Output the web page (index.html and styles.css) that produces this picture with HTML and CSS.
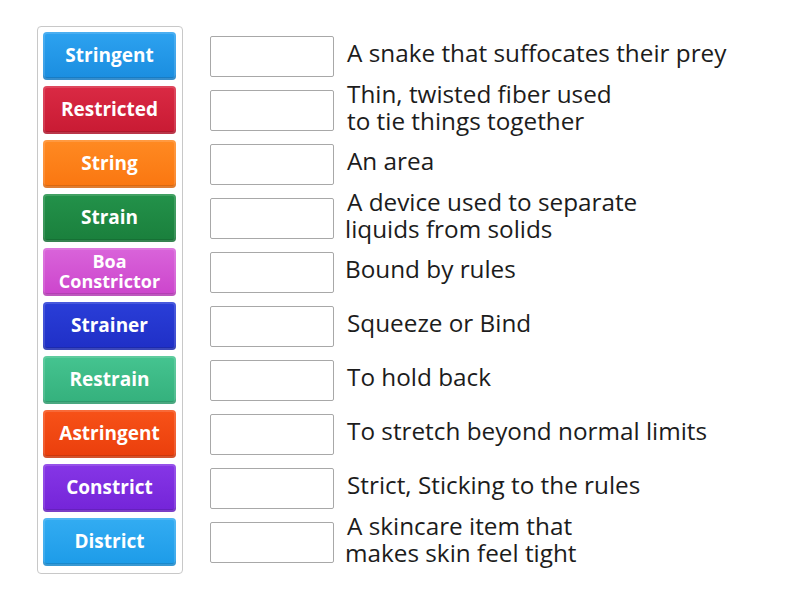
FILE: index.html
```html
<!DOCTYPE html>
<html>
<head>
<meta charset="utf-8">
<link rel="stylesheet" href="styles.css">
</head>
<body>
<div class="game">
  <div class="bank">
    <div class="tile c1">Stringent</div>
    <div class="tile c2">Restricted</div>
    <div class="tile c3">String</div>
    <div class="tile c4">Strain</div>
    <div class="tile c5 small">Boa<br>Constrictor</div>
    <div class="tile c6">Strainer</div>
    <div class="tile c7">Restrain</div>
    <div class="tile c8">Astringent</div>
    <div class="tile c9">Constrict</div>
    <div class="tile c10">District</div>
  </div>
  <div class="rows">
    <div class="row"><div class="slot"></div><div class="def"><span class="ln">A snake that suffocates their prey</span></div></div>
    <div class="row"><div class="slot"></div><div class="def"><span class="ln">Thin, twisted fiber used</span><span class="ln">to tie things together</span></div></div>
    <div class="row"><div class="slot"></div><div class="def"><span class="ln">An area</span></div></div>
    <div class="row"><div class="slot"></div><div class="def"><span class="ln">A device used to separate</span><span class="ln nudge">liquids from solids</span></div></div>
    <div class="row"><div class="slot"></div><div class="def"><span class="ln nudge">Bound by rules</span></div></div>
    <div class="row"><div class="slot"></div><div class="def"><span class="ln">Squeeze or Bind</span></div></div>
    <div class="row"><div class="slot"></div><div class="def"><span class="ln">To hold back</span></div></div>
    <div class="row"><div class="slot"></div><div class="def"><span class="ln">To stretch beyond normal limits</span></div></div>
    <div class="row"><div class="slot"></div><div class="def"><span class="ln">Strict, Sticking to the rules</span></div></div>
    <div class="row"><div class="slot"></div><div class="def"><span class="ln">A skincare item that</span><span class="ln nudge">makes skin feel tight</span></div></div>
  </div>
</div>
</body>
</html>
```

FILE: styles.css
```css
html, body {
  margin: 0;
  padding: 0;
  background: #fff;
}

.game {
  display: flex;
  align-items: flex-start;
  padding: 26px 0 0 37px;
  font-family: "Open Sans", "Liberation Sans", sans-serif;
}

.bank {
  display: flex;
  flex-direction: column;
  gap: 6px;
  padding: 5px 6px 7px 5px;
  border: 1px solid #c8c8c8;
  border-radius: 4px;
}

.tile {
  width: 133px;
  height: 48px;
  box-sizing: border-box;
  padding-bottom: 2px;
  border-radius: 4px;
  display: flex;
  align-items: center;
  justify-content: center;
  text-align: center;
  color: #fff;
  font-weight: 700;
  font-size: 19px;
  line-height: 20px;
  box-shadow: inset 0 0 0 2px rgba(255,255,255,0.14), inset 0 -3px 0 rgba(0,0,0,0.12);
}

.tile.small {
  font-size: 18px;
}

.c1 { background: linear-gradient(#2da2f0, #1a8ddf); }
.c2 { background: linear-gradient(#da2a44, #c81a33); }
.c3 { background: linear-gradient(#ff8a22, #fa7610); }
.c4 { background: linear-gradient(#23924a, #1a7f3c); }
.c5 { background: linear-gradient(#d964da, #cc44cc); }
.c6 { background: linear-gradient(#2a3ed8, #1f2fc6); }
.c7 { background: linear-gradient(#45c490, #34b07c); }
.c8 { background: linear-gradient(#f75218, #ea3e0c); }
.c9 { background: linear-gradient(#8636e6, #7424d8); }
.c10 { background: linear-gradient(#33acf2, #1c9be8); }

.rows {
  display: flex;
  flex-direction: column;
  gap: 6px;
  margin-left: 27px;
  padding-top: 6px;
}

.row {
  height: 48px;
  display: flex;
  align-items: center;
  gap: 13px;
}

.slot {
  width: 124px;
  height: 41px;
  box-sizing: border-box;
  border: 1px solid #a8a8a8;
  border-radius: 2px;
  background: #fff;
  flex: none;
}

.def {
  display: flex;
  flex-direction: column;
  font-size: 24.3px;
  line-height: 27px;
  color: #1c1c1c;
  white-space: nowrap;
  margin-top: -7px;
}

.ln {
  display: block;
  height: 27px;
}

.nudge {
  margin-left: -2px;
}
```
